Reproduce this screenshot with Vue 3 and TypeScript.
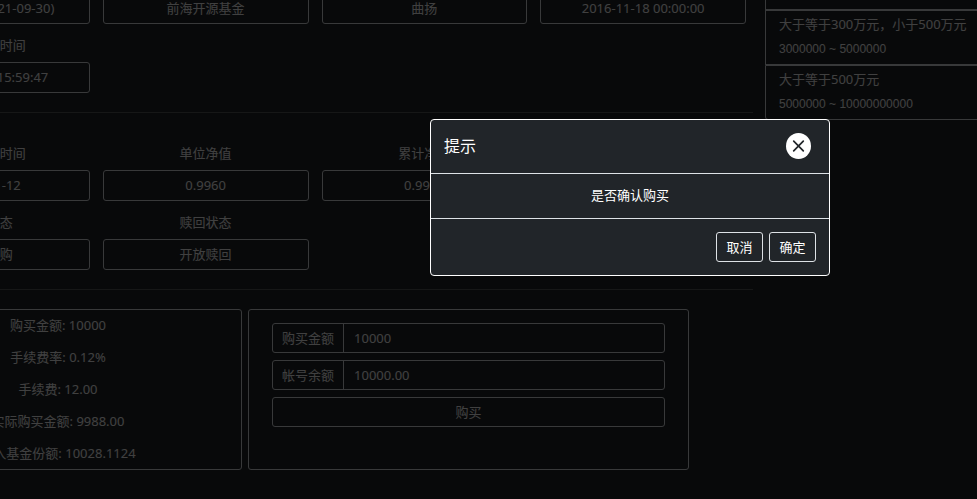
<script setup lang="ts">
import { computed, ref } from 'vue'

interface Field {
  label: string
  value: string
}

interface Tier {
  name: string
  range: string
}

const basics: Field[] = [
  { label: '基金规模', value: '12.21亿元(2021-09-30)' },
  { label: '基金公司', value: '前海开源基金' },
  { label: '基金经理', value: '曲扬' },
  { label: '成立时间', value: '2016-11-18 00:00:00' },
  { label: '数据更新时间', value: '2021-11-12 15:59:47' },
]

const quotes: Field[] = [
  { label: '净值更新时间', value: '2021-11-12' },
  { label: '单位净值', value: '0.9960' },
  { label: '累计净值', value: '0.9960' },
]

const states: Field[] = [
  { label: '申购状态', value: '开放申购' },
  { label: '赎回状态', value: '开放赎回' },
]

const tiers: Tier[] = [
  { name: '大于等于100万元，小于300万元', range: '1000000 ~ 3000000' },
  { name: '大于等于300万元，小于500万元', range: '3000000 ~ 5000000' },
  { name: '大于等于500万元', range: '5000000 ~ 10000000000' },
]

const netValue = 0.996
const feeRate = 0.12
const amount = ref('10000')
const balance = ref('10000.00')
const confirming = ref(true)

const fee = computed(() => (Number(amount.value) * feeRate) / 100)
const invested = computed(() => Number(amount.value) - fee.value)
const summary = computed<Field[]>(() => [
  { label: '购买金额', value: amount.value },
  { label: '手续费率', value: `${feeRate}%` },
  { label: '手续费', value: fee.value.toFixed(2) },
  { label: '实际购买金额', value: invested.value.toFixed(2) },
  { label: '买入基金份额', value: (invested.value / netValue).toFixed(4) },
])
</script>

<template>
  <div class="shell">
    <div class="page">
      <main class="main">
        <section class="fields">
          <div v-for="f in basics" :key="f.label" class="field">
            <span class="field-label">{{ f.label }}</span>
            <span class="field-value">{{ f.value }}</span>
          </div>
        </section>
        <hr class="rule" />
        <section class="quote">
          <div class="fields">
            <div v-for="f in quotes" :key="f.label" class="field">
              <span class="field-label">{{ f.label }}</span>
              <span class="field-value">{{ f.value }}</span>
            </div>
          </div>
          <div class="fields">
            <div v-for="f in states" :key="f.label" class="field">
              <span class="field-label">{{ f.label }}</span>
              <span class="field-value">{{ f.value }}</span>
            </div>
          </div>
        </section>
        <hr class="rule" />
        <section class="trade">
          <div class="panel summary">
            <div v-for="s in summary" :key="s.label">{{ s.label }}: {{ s.value }}</div>
          </div>
          <form class="panel form" @submit.prevent="confirming = true">
            <div class="group">
              <label class="addon" for="amount">购买金额</label>
              <input id="amount" v-model="amount" class="input" type="text" />
            </div>
            <div class="group">
              <label class="addon" for="balance">帐号余额</label>
              <input id="balance" v-model="balance" class="input" type="text" readonly />
            </div>
            <button class="button" type="submit">购买</button>
          </form>
        </section>
      </main>
      <aside class="aside">
        <ul class="tiers">
          <li v-for="t in tiers" :key="t.range" class="tier">
            <span>{{ t.name }}</span>
            <small class="range">{{ t.range }}</small>
          </li>
        </ul>
      </aside>
    </div>

    <div v-if="confirming" class="backdrop">
      <div class="modal" role="dialog" aria-modal="true" aria-labelledby="modal-title">
        <header class="modal-header">
          <h2 id="modal-title" class="modal-title">提示</h2>
          <button class="close" type="button" aria-label="关闭" @click="confirming = false">
            <svg viewBox="0 0 25 26" width="25" height="26" aria-hidden="true">
              <path d="M7.7 8.2 L17.3 17.8 M17.3 8.2 L7.7 17.8" fill="none" stroke="#212529" stroke-width="1.7" stroke-linecap="round" />
            </svg>
          </button>
        </header>
        <div class="modal-body">是否确认购买</div>
        <footer class="modal-footer">
          <button class="button" type="button" @click="confirming = false">取消</button>
          <button class="button" type="button" @click="confirming = false">确定</button>
        </footer>
      </div>
    </div>
  </div>
</template>

<style>
body {
  background: #212529;
}
</style>

<style scoped>
.shell,
.shell * {
  box-sizing: border-box;
}

.shell {
  display: flow-root;
  min-height: 100vh;
  overflow: hidden;
  background: #212529;
  color: #fff;
  font-family: "Noto Sans", "Noto Sans CJK SC", sans-serif;
  font-size: 13px;
  line-height: 20px;
}

.page {
  display: flex;
  align-items: flex-start;
  gap: 12px;
  margin: -45px -60px 0 -126px;
}

.main {
  flex: 1;
  min-width: 0;
  padding-top: 11px;
}

.fields {
  display: grid;
  grid-template-columns: repeat(4, minmax(0, 1fr));
  gap: 11px 13px;
  padding: 0 7px 0 10px;
}

.field {
  display: flex;
  flex-direction: column;
  gap: 7px;
  text-align: center;
  white-space: nowrap;
}

.field-value {
  height: 31px;
  border: 1px solid #dee2e6;
  border-radius: 3px;
  line-height: 29px;
}

.rule {
  margin: 19px 0;
  border: 0;
  border-top: 1px solid #fff;
  opacity: 0.25;
}

.quote {
  display: flex;
  flex-direction: column;
  gap: 11px;
  padding-top: 11px;
}

.trade {
  display: grid;
  grid-template-columns: 368fr 441fr;
  gap: 6px;
  padding-right: 64px;
}

.panel {
  border: 1px solid #dee2e6;
  border-radius: 3px;
}

.summary {
  display: flex;
  flex-direction: column;
  gap: 12px;
  padding: 5px 0 6px;
  text-align: center;
}

.form {
  display: flex;
  flex-direction: column;
  gap: 7px;
  padding: 13px 23px;
}

.group {
  display: flex;
  height: 30px;
  border: 1px solid #dee2e6;
  border-radius: 3px;
}

.addon {
  padding: 0 9px;
  border-right: 1px solid #dee2e6;
  line-height: 28px;
}

.input {
  flex: 1;
  min-width: 0;
  padding: 0 10px;
  border: 0;
  background: transparent;
  color: inherit;
  font: inherit;
  outline: 0;
}

.button {
  min-width: 47px;
  height: 30px;
  padding: 0 9px;
  border: 1px solid #dee2e6;
  border-radius: 3px;
  background: transparent;
  color: inherit;
  font: inherit;
  cursor: pointer;
}

.aside {
  flex: 0 0 272px;
}

.tiers {
  margin: 0;
  padding: 0;
  list-style: none;
}

.tier {
  display: flex;
  flex-direction: column;
  gap: 5px;
  height: 55px;
  padding: 3px 13px;
  border: 1px solid #dee2e6;
  white-space: nowrap;
}

.tier:last-child {
  border-radius: 0 0 3px 3px;
}

.range {
  font-family: "Liberation Sans", sans-serif;
  font-size: 12px;
}

.backdrop {
  position: fixed;
  inset: 0;
  display: flex;
  align-items: flex-start;
  justify-content: center;
  padding: 119px 0 0 283px;
  background: rgba(0, 0, 0, 0.75);
}

.modal {
  width: 400px;
  border: 1px solid #fff;
  border-radius: 4px;
  background: #212529;
}

.modal-header {
  display: flex;
  align-items: center;
  justify-content: space-between;
  padding: 13px 18px 14px 13px;
  border-bottom: 1px solid #dee2e6;
}

.modal-title {
  margin: 0;
  font-size: 16px;
  font-weight: 400;
  line-height: 26px;
}

.close {
  width: 25px;
  height: 26px;
  padding: 0;
  border: 0;
  border-radius: 50%;
  background: #fff;
  cursor: pointer;
}

.close svg {
  display: block;
}

.modal-body {
  padding: 11px 13px 13px;
  text-align: center;
}

.modal-footer {
  display: flex;
  justify-content: flex-end;
  gap: 6px;
  padding: 13px;
  border-top: 1px solid #dee2e6;
}
</style>
